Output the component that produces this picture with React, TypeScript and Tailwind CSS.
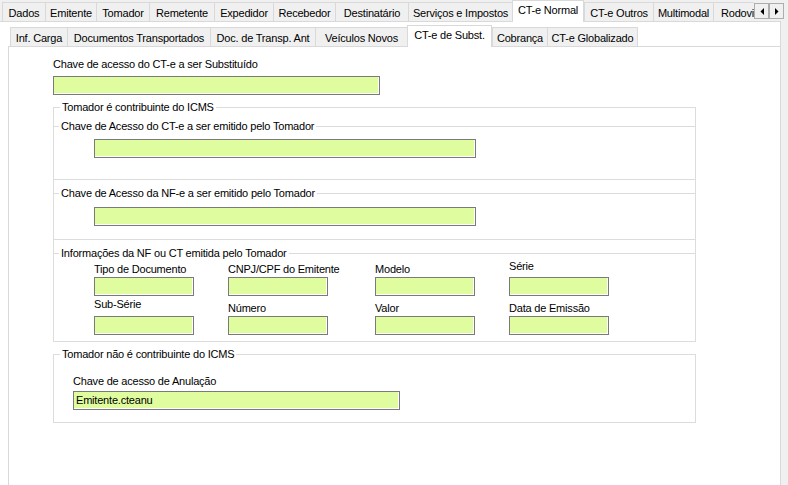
import React from 'react'

type TabDef = { label: string; w: string; active?: boolean; last?: boolean; clip?: boolean }

const topTabs: TabDef[] = [
  { label: 'Dados', w: 'w-[43px]' },
  { label: 'Emitente', w: 'w-[51px]' },
  { label: 'Tomador', w: 'w-[53px]' },
  { label: 'Remetente', w: 'w-[65px]' },
  { label: 'Expedidor', w: 'w-[59px]' },
  { label: 'Recebedor', w: 'w-[62px]' },
  { label: 'Destinatário', w: 'w-[73px]' },
  { label: 'Serviços e Impostos', w: 'w-[104px]' },
  { label: 'CT-e Normal', w: 'w-[72px]', active: true },
  { label: 'CT-e Outros', w: 'w-[69px]' },
  { label: 'Multimodal', w: 'w-[60px]' },
  { label: 'Rodoviário', w: 'w-[41px]', clip: true },
]

const innerTabs: TabDef[] = [
  { label: 'Inf. Carga', w: 'w-[57px]' },
  { label: 'Documentos Transportados', w: 'w-[143px]' },
  { label: 'Doc. de Transp. Ant', w: 'w-[105px]' },
  { label: 'Veículos Novos', w: 'w-[92px]' },
  { label: 'CT-e de Subst.', w: 'w-[85px]', active: true },
  { label: 'Cobrança', w: 'w-[55px]' },
  { label: 'CT-e Globalizado', w: 'w-[91px]', last: true },
]

function Tab({ tab, activeHeight }: { tab: TabDef; activeHeight: string }) {
  if (tab.active) {
    return (
      <div
        className={`${tab.w} ${activeHeight} -mb-px relative z-10 flex items-center justify-center pb-[2px] border-t border-l border-r border-[#d9d9d9] bg-white whitespace-nowrap`}
      >
        {tab.label}
      </div>
    )
  }
  return (
    <div
      className={`${tab.w} h-[19px] flex items-center pt-[2px] border-t border-l border-[#d9d9d9] bg-[#f0f0f0] whitespace-nowrap overflow-hidden ${
        tab.clip ? 'justify-start pl-[7px]' : 'justify-center'
      } ${tab.last ? 'border-r' : ''}`}
    >
      {tab.label}
    </div>
  )
}

function ArrowBtn({ dir }: { dir: 'left' | 'right' }) {
  return (
    <div className="w-[15px] h-[16px] border border-[#adadad] bg-[#f0f0f0] flex items-center justify-center">
      <svg width="4" height="7" viewBox="0 0 4 7">
        {dir === 'left' ? <polygon points="4,0 4,7 0.5,3.5" fill="#000" /> : <polygon points="0,0 0,7 3.5,3.5" fill="#000" />}
      </svg>
    </div>
  )
}

function Input({ className = '', value }: { className?: string; value?: string }) {
  return (
    <div
      className={`h-[19px] border border-[#7a7a7a] bg-[#dffd9f] shadow-[inset_-1px_-1px_0_#ffffff] pl-[2px] leading-[17px] whitespace-nowrap ${className}`}
    >
      {value}
    </div>
  )
}

function Legend({ children, className = '' }: { children: React.ReactNode; className?: string }) {
  return <div className={`-mt-[7px] h-[13px] w-fit bg-white px-[2px] leading-[13px] ${className}`}>{children}</div>
}

function Field({ label, raise = '' }: { label: string; raise?: string }) {
  return (
    <div className="flex flex-col">
      <div className={`h-[13px] whitespace-nowrap ${raise}`}>{label}</div>
      <Input className="mt-[1px] w-[100px]" />
    </div>
  )
}

export default function App() {
  return (
    <div className="w-[788px] h-[485px] overflow-hidden bg-[#f0f0f0] font-['Liberation_Sans',Arial,sans-serif] text-[11px] leading-[13px] tracking-[-0.2px] text-black">
      {/* Main tabs */}
      <div className="flex h-[21px] items-end pl-[2px]">
        {topTabs.map((t) => (
          <Tab key={t.label} tab={t} activeHeight="h-[22px]" />
        ))}
        <div className="self-start mt-[3px] flex">
          <ArrowBtn dir="left" />
          <ArrowBtn dir="right" />
        </div>
      </div>

      <div className="w-[781px] h-[464px] bg-white border-t border-r border-[#d9d9d9] flex flex-col">
        {/* Sub tabs */}
        <div className="flex h-[24px] items-end pl-[10px]">
          {innerTabs.map((t) => (
            <Tab key={t.label} tab={t} activeHeight="h-[22px]" />
          ))}
        </div>

        <div className="ml-[8px] flex-1 border-t border-l border-[#d9d9d9] pl-[44px] pt-[11px]">
          <div className="h-[13px]">Chave de acesso do CT-e a ser Substituído</div>
          <Input className="mt-[5px] w-[327px]" />

          {/* Tomador contribuinte */}
          <div className="mt-[12px] w-[643px] border border-[#dcdcdc]">
            <Legend className="ml-[6px]">Tomador é contribuinte do ICMS</Legend>

            <div className="mt-[12px] border-t border-b border-[#dcdcdc] pb-[21px]">
              <Legend className="ml-[5px]">Chave de Acesso do CT-e a ser emitido pelo Tomador</Legend>
              <Input className="mt-[6px] ml-[40px] w-[382px]" />
            </div>

            <div className="mt-[13px] border-t border-b border-[#dcdcdc] pb-[13px]">
              <Legend className="ml-[5px]">Chave de Acesso da NF-e a ser emitido pelo Tomador</Legend>
              <Input className="mt-[7px] ml-[40px] w-[382px]" />
            </div>

            <div className="mt-[13px] border-t border-[#dcdcdc] pb-[6px]">
              <Legend className="ml-[5px]">Informações da NF ou CT emitida pelo Tomador</Legend>
              <div className="mt-[3px] ml-[40px] grid grid-cols-[134px_147px_134px_100px]">
                <Field label="Tipo de Documento" />
                <Field label="CNPJ/CPF do Emitente" />
                <Field label="Modelo" />
                <Field label="Série" raise="-mt-[3px] mb-[3px]" />
              </div>
              <div className="mt-[6px] ml-[40px] grid grid-cols-[134px_147px_134px_100px]">
                <Field label="Sub-Série" raise="-mt-[4px] mb-[4px]" />
                <Field label="Número" />
                <Field label="Valor" />
                <Field label="Data de Emissão" />
              </div>
            </div>
          </div>

          {/* Tomador nao contribuinte */}
          <div className="mt-[12px] w-[643px] border border-[#dcdcdc] pb-[12px]">
            <Legend className="ml-[6px]">Tomador não é contribuinte do ICMS</Legend>
            <div className="mt-[14px] ml-[19px] h-[13px]">Chave de acesso de Anulação</div>
            <Input className="mt-[3px] ml-[19px] w-[327px]" value="Emitente.cteanu" />
          </div>
        </div>
      </div>
    </div>
  )
}
